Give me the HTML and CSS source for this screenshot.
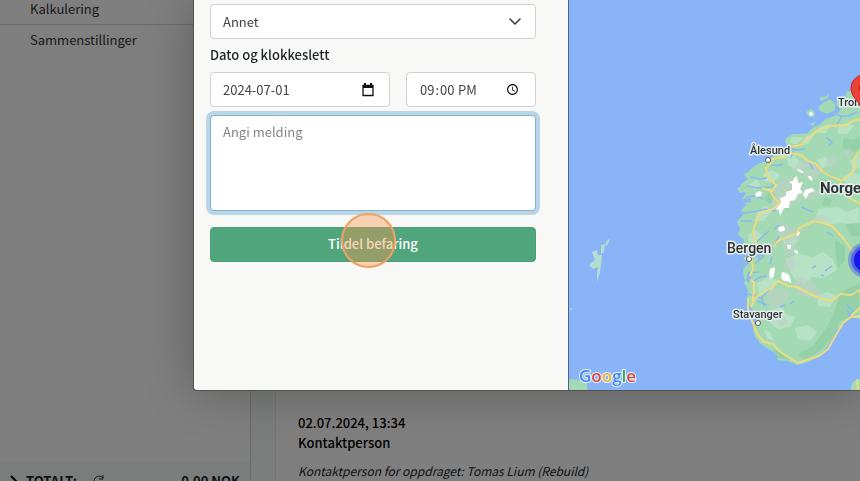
FILE: index.html
```html
<!DOCTYPE html>
<html lang="no">
<head>
    <meta charset="UTF-8">
    <meta name="viewport" content="width=device-width, initial-scale=1.0">
    <title>Tildel befaring</title>
    <link rel="stylesheet" href="styles.css">
</head>
<body>
    <div class="page">
        <aside class="sidebar">
            <nav class="menu">
                <a href="#">Kalkulering</a>
                <a href="#">Sammenstillinger</a>
            </nav>
            <div class="total">
                <svg class="arrow" viewBox="0 0 8 12" width="8" height="12"><path d="M1 1l5 5-5 5" fill="none" stroke="#000" stroke-width="2"/></svg>
                <b>TOTALT:</b>
                <svg class="refresh" viewBox="0 0 12 12" width="12" height="12"><path d="M10 3A5 5 0 1 0 11 7M10 0v4H6" fill="none" stroke="#333" stroke-width="1"/></svg>
                <b class="sum">0,00 NOK</b>
            </div>
        </aside>
        <main class="content">
            <article class="log">
                <h2>02.07.2024, 13:34</h2>
                <h2>Kontaktperson</h2>
                <p>Kontaktperson for oppdraget: Tomas Lium (Rebuild)</p>
            </article>
        </main>
    </div>

    <div class="backdrop"></div>
    <div class="modal" role="dialog" aria-label="Tildel befaring">
        <form class="form">
            <select class="control type" aria-label="Type">
                <option>Annet</option>
            </select>
            <label class="label" for="dato">Dato og klokkeslett</label>
            <div class="row">
                <div class="control date">
                    <input id="dato" type="text" value="2024-07-01">
                    <svg viewBox="0 0 12 14" width="12" height="14"><path d="M1 2.500h10v10H1z" fill="none" stroke="#111" stroke-width="1.300"/><path d="M1 2h10v3H1zM2 0h2v3H2zM8 0h2v3H8z" fill="#111"/></svg>
                </div>
                <input class="control time" type="time" value="21:00" aria-label="Klokkeslett">
            </div>
            <textarea class="control message" placeholder="Angi melding" aria-label="Melding"></textarea>
            <button class="submit" type="button">Tildel befaring<span class="click"></span></button>
        </form>
        <div class="map">
            <svg viewBox="569 0 291 390" preserveAspectRatio="xMinYMin slice">
                <!-- land -->
                <g fill="#a3dab4">
                    <path d="M870 86L858 88 853 91 847 91 845 97 838 98 836 105 841 110 834 116 826 119 820 124 812 128 808 133 800 134 793 134 786 138 785 143 790 146 782 149 774 155 768 161 760 163 753 167 749 171 744 175 748 179 741 184 740 190 746 193 742 199 746 205 741 210 743 215 737 222 740 228 738 234 744 240 742 247 748 251 750 262 745 267 747 275 744 283 748 290 747 301 751 308 757 313 756 320 753 330 755 337 761 344 768 349 778 354 777 360 788 361 797 365 808 362 818 357 826 348 832 339 836 330 844 323 850 317 860 319 870 314Z"/>
                    <path d="M818 107l5-4 7-4 5 5 0 6-8 4-7-3zM819 98l8-2 2-4-1 6-7 3zM806 112l5-3 4 3-1 5-6-1zM809 124l7-2-3 4zM744 174l4-1 6 5-5 2zM737 188l6-2 4 4-7 3zM738 223l5-2 2 4-5 2zM743 267l5-2 3 5-4 11-3-2z"/>
                    <path d="M569 379l10 1 8 2 0 8-18 0zM850 390l3-8 6-3 11 2v9zM569 308l3 0-1 3z"/>
                    <path fill="#b2dfd0" d="M592 252l5-2 1 5 4 0-1 9-1 8-3 10 0-9 1-6-5 2-4-4 6-5zM601 245l4-1-1 8-3 2zM606 242l4-4-2 6-3 2z"/>
                </g>
                <!-- lighter lowland -->
                <g fill="#b7e2c5">
                    <path d="M792 137l12 0-7 7-8-1zM806 136l9-2-7 10-8 2zM820 127l11-4-5 10-9 0zM838 127l9-4 7 3-7 8-9 0zM748 185l8-6 5 6-6 5zM763 174l9-4 8 5-7 8-8-2zM787 157l7-2 9 10-6 5-9-5zM817 160l9-4 3 8-7 5zM850 161l10-6v12l-7 5zM819 209l18-2 9 5 13-5v28l-15-12-19 2-10-7zM757 211l9-5 6 5-8 10-9 0zM783 239l7-5 9 5-6 7-9-1zM785 259l14-5 14 3 10-5 10 7 4 11-13 8-12-1-8 8-11-8zM757 283l12-6 8 3-5 12-13 4zM772 310l10-4 4 8 9 3-4 10-13 2-8-6zM795 328l13-3 9 7-7 9-12-2zM817 296l10-4 10 4-7 11-12-1zM764 330l6 2 4 9-7-3zM842 177l10-5 8 3v11l-11 3zM748 235l7-5 7 5-7 9-6-2z"/>
                </g>
                <!-- deeper forest -->
                <g fill="#95d1a8">
                    <path d="M843 138l11 2 6-5v15l-9 4-8-6zM820 179l8 1-3 8-8 1zM786 198l6 4-5 8-6-4zM825 197l7 3-3 6-7-1zM840 293l20-10v23l-13 12-8 4-6 14-12 14-16 10-8-5 16-9 13-18 7-12zM835 239l10 7 0 14-7 8-2-13zM772 348l12 6 6 6-12-2zM845 224l15-1v13l-8 1zM769 191l8 3-7 10-6-4z"/>
                </g>
                <!-- mountains -->
                <g fill="#bdd1c4" opacity=".65">
                    <path d="M798 162l10-3 8 7 7 1-6 11-8 3-9-9-7-2zM776 184l10-7 13 3 5 9-3 10-15 10-11 4-4-6zM805 188l16 2-4 8-13 2zM826 160l7-5 6 3-5 8-7 2zM843 150l6-2 5 5-7 6zM777 221l11 4 8 5 9-2-7 11-12 5-9-8zM783 245l11-3 4 10-12 4zM796 276l11 3 14 11-2 9-15-2-10-8zM769 289l12-1 10 5-7 13-11 3-8-8zM783 263l7-7 6 9-8 9zM776 320l8-3 5 6-9 4zM810 216l14-1 5 5-12 2z"/>
                </g>
                <!-- fjords and lakes -->
                <g fill="none" stroke="#8ab9ee" stroke-width="1.500">
                    <path d="M786 147l10 3 9-1M793 151l-2 7M768 164l9 2 6-2M750 177l10 2 7-1M747 186l11 2 13-1 5-4M746 197l9-1 8 3M741 213l12-1 13-3 10 2M741 221l11 0M752 246l9-8 8-7M750 257l14-2 9-8 6-11M755 264l9-8M759 260l-1-12M751 273l8-1M752 282l8-5 7-1M748 294l13 4 8-8M762 298l2 9M757 301l10 4M832 113l9 3 8 0 8-4M842 116l-5 9M826 137l6 5-3 3M846 304l11 11M847 310l7 11M812 268l4-2M821 275l3 1M832 266l-7 5M842 326l-1 3M790 304l4-3M780 307l5-2M808 161l5 8M830 175l4 4M842 188l5 4M801 207l12 5M827 232l6 4M772 257l-2 7M774 229l5-4"/>
                    <path stroke-width="4" d="M749 247l-1 9M744 259l-1 9M750 272l-2 10M743 201l8-1M848 313l5 4"/>
                </g>
                <!-- glaciers -->
                <g fill="#fff">
                    <path d="M797 169l4 1 3 3-2 0-4-2zM808 176l3 0 2 5-4-2zM794 178l3-2 1 7 5-1-3 7 3 4-5 1-3 6-5 1-1 7-5 0-4 8-1-6-3-1 5-7-1-4 6-2 0-4 6-2 0-6-3-2 4-1zM805 190l7-2 3 3-6 2-3 6-3-4zM755 194l4-3 3 1-1 4-5 1zM779 227l5-1 1 4-4 2-3-2zM797 231l3 1-1 3-3 1zM787 245l4 0 0 4-3 0zM794 250l4 1 0 3-3-1zM770 269l5-2-1 9-3 3-2-4zM782 272l4 1 3 2 2 6 0 2-4-2-3 0-3-3zM809 113l3-1 1 3-3 1z"/>
                </g>
                <!-- roads -->
                <g fill="none" stroke="#eedb7f" stroke-width="2" stroke-linejoin="round">
                    <path d="M771 159l14-2 5-4 11 2 7 6 8 3 7 8 9 5 8 3 4 0 7-6 4-8-1-7 7-10 3-9 6-5"/>
                    <path d="M791 147l10-2 6-6 11-9 13-4 15-1 9-5 15-1"/>
                    <path d="M773 161l-7 7 2 9 8 8-4 6-10-3M769 189l5 9 6 5-7 6-13 4-3 7-4 11 4 16 4-3M744 258l8 3 1 8-3 7M750 280l4 2 0 11-2 8M751 307l4-9 17-11 6-6 11 5 8 1 13 7 12 5 10 2 8-7 11 1 7-4 13-3"/>
                    <path d="M773 247l5-6 9-4 10-4 2-5 9-4 6-3 9 2 9 3 11 12 9 12 8 10M840 180l6 16 14 8 10 0M860 316l-9 1-8 6-6 10-9 16-9 7-10 3-11 4-13-8-7-5-5-6-9-2-6-7-6-14-4-10 0-13M858 390l-1-11M860 290l1 17-10 9"/>
                </g>
                <!-- place labels -->
                <g class="places">
                    <circle cx="768" cy="160" r="2.500"/>
                    <circle cx="749" cy="259" r="2.500"/>
                    <circle cx="758" cy="323" r="2.500"/>
                    <text x="750" y="154">Ålesund</text>
                    <text x="838" y="106">Trondheim</text>
                    <text x="733" y="318">Stavanger</text>
                    <text class="city" x="727" y="253">Bergen</text>
                    <text class="country" x="820" y="193">Norge</text>
                </g>
                <!-- markers -->
                <path d="M864 114c-2-12-13-15-13-26a13 13 0 0 1 26 0c0 11-11 14-13 26z" fill="#ea4335" stroke="#c5221f"/>
                <circle cx="864" cy="88" r="5" fill="#7c1712"/>
                <circle cx="866" cy="260" r="18" fill="#2222ff" opacity=".3"/>
                <circle cx="866" cy="260" r="15" fill="#2222ff" opacity=".5"/>
                <circle cx="866" cy="260" r="12" fill="#1717e8"/>
                <text class="logo" x="579" y="382"><tspan fill="#4285f4">G</tspan><tspan fill="#d9483b">o</tspan><tspan fill="#efb52c">o</tspan><tspan fill="#4285f4">g</tspan><tspan fill="#34a853">l</tspan><tspan fill="#d9483b">e</tspan></text>
            </svg>
        </div>
    </div>
</body>
</html>
```
FILE: styles.css
```css
*{
    box-sizing: border-box;
}
body{
    margin: 0;
    height: 100vh;
    overflow: hidden;
    color: #212529;
    font: 13px/20px "Noto Sans CJK SC", sans-serif;
}
.page{
    display: flex;
    height: 100%;
    background: #f4fbf9;
}
.sidebar{
    display: flex;
    flex-direction: column;
    justify-content: space-between;
    width: 251px;
    background: #fff;
    border-right: 1px solid #ced6d4;
}
.menu{
    margin-top: -7px;
}
.menu a{
    display: block;
    padding: 5px 30px;
    color: #333;
    text-decoration: none;
}
.menu a:first-child{
    padding-top: 6px;
    border-bottom: 1px solid #cddad9;
}
.total{
    display: flex;
    align-items: center;
    height: 40px;
    margin-bottom: -20px;
    padding: 0 10px;
    background: #f4fbf9;
}
.arrow{
    margin-right: 8px;
}
.refresh{
    margin-left: 16px;
}
.sum{
    margin-left: auto;
}
.content{
    flex: 1;
    display: flex;
    padding-left: 24px;
}
.log{
    flex: 1;
    padding: 413px 22px 0;
    background: #fff;
    border-left: 1px solid #e3ebe9;
}
.log h2{
    margin: 0;
    font-size: 13px;
    font-weight: 500;
    color: #000;
}
.log p{
    margin: 8px 0;
    font-size: 12px;
    font-style: italic;
    white-space: nowrap;
}
.backdrop{
    position: fixed;
    inset: 0;
    background: rgba(0,0,0,.5);
}
.modal{
    position: absolute;
    top: 0;
    left: 193px;
    right: 0;
    display: flex;
    height: 391px;
    overflow: hidden;
    background: #f8f8f6;
    border: 1px solid #50524e;
    border-width: 0 0 1px 1px;
    border-radius: 0 0 0 4px;
    box-shadow: 0 0 48px rgba(0,0,0,.28);
}
.form{
    flex: 0 0 375px;
    display: flex;
    flex-direction: column;
    padding: 4px 32px 0 16px;
    border-right: 1px solid #4d6488;
}
.control{
    width: 100%;
    height: 35px;
    padding: 0 12px;
    color: #444;
    background: #fff;
    border: 1px solid #ced0d4;
    border-radius: 4px;
    font: inherit;
}
.type{
    appearance: none;
    background: #fff url("data:image/svg+xml,%3Csvg xmlns='http://www.w3.org/2000/svg' viewBox='0 0 12 12'%3E%3Cpath d='M1 3l5 5 5-5' fill='none' stroke='%23343a40' stroke-width='1.500' stroke-linecap='round' stroke-linejoin='round'/%3E%3C/svg%3E") no-repeat right 14px center / 12px;
}
.label{
    margin: 6px 0 7px;
    font-weight: 500;
}
.row{
    display: flex;
    gap: 16px;
}
.date{
    display: flex;
    align-items: center;
    flex: 0 0 180px;
    min-width: 0;
    padding-right: 15px;
}
.date input{
    flex: 1;
    min-width: 0;
    padding: 0;
    color: inherit;
    background: none;
    border: 0;
    font: inherit;
}
.time{
    flex: 1;
    min-width: 0;
}
.message{
    display: block;
    height: 96px;
    margin-top: 8px;
    padding: 6px 12px;
    resize: none;
    border-color: #7fb2d3;
    box-shadow: 0 0 0 4px #b9d5e6;
}
.message::placeholder{
    color: #81858a;
}
.submit{
    position: relative;
    height: 35px;
    margin-top: 16px;
    padding: 0 0 2px;
    color: #fff;
    background: #50a57c;
    border: 1px solid #4a9f76;
    border-radius: 4px;
    font: inherit;
    font-weight: 500;
}
.click{
    position: absolute;
    top: -15px;
    left: calc(50% - 32px);
    width: 55px;
    height: 55px;
    background: rgba(246,150,76,.4);
    border: 2px solid #f0a161;
    border-radius: 50%;
    pointer-events: none;
}
.map{
    flex: 1;
    background: #8ab4f8;
}
.map svg{
    display: block;
    width: 100%;
    height: 100%;
}
.places{
    fill: #2f3437;
    stroke: #e6efee;
    stroke-width: 3px;
    stroke-linejoin: round;
    paint-order: stroke;
    font: 500 11px Roboto, sans-serif;
}
.places circle{
    fill: #fff;
    stroke: #555;
    stroke-width: 1px;
    paint-order: normal;
}
.places .city{
    font-size: 14px;
}
.places .country{
    font-size: 15px;
    font-weight: 700;
}
.logo{
    font: 600 17px "Open Sans", sans-serif;
    stroke: #e8f0fe;
    stroke-width: 2px;
    paint-order: stroke;
}
```
